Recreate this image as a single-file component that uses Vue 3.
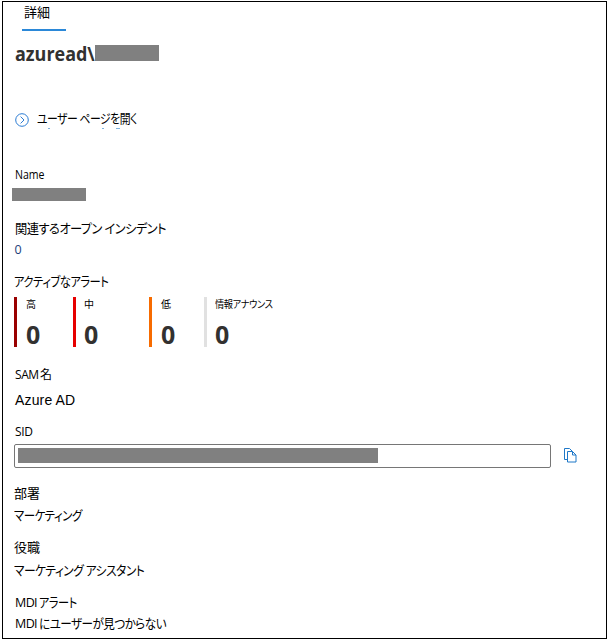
<script setup>
const alerts = [
  { label: '高', count: 0, tone: 'high' },
  { label: '中', count: 0, tone: 'medium' },
  { label: '低', count: 0, tone: 'low' },
  { label: '情報アナウンス', count: 0, tone: 'info' },
]
</script>

<template>
  <main class="panel">
    <nav class="tabs"><span class="tab">詳細</span></nav>
    <h1 class="title"><span>azuread\</span><i class="mask title-mask"></i></h1>
    <a class="open">
      <svg class="open-icon" viewBox="0 0 14 14"><circle cx="7" cy="7" r="6.3" /><path d="M5.6 3.6 9 7 5.6 10.4" /></svg>
      <span class="open-text">ユーザー ページを開く</span>
    </a>
    <div class="marks"><i></i><i></i><i></i></div>

    <div class="row name">Name</div>
    <i class="mask name-mask"></i>
    <div class="row incidents">関連するオープン インシデント</div>
    <div class="row zero">0</div>
    <div class="row active">アクティブなアラート</div>
    <section class="alerts">
      <div v-for="a in alerts" :key="a.tone" class="alert" :class="a.tone">
        <span class="alert-label">{{ a.label }}</span>
        <strong>{{ a.count }}</strong>
      </div>
    </section>
    <div class="row sam">SAM 名</div>
    <div class="row azure">Azure AD</div>
    <div class="row sid">SID</div>
    <div class="sid-line">
      <div class="field"><i class="mask field-mask"></i></div>
      <svg class="copy" viewBox="0 0 14 15"><path d="M4.5 11.5h-3V.5h5l3 3M4.5 3.5h5l3.5 3.5v7h-8.5zM9.5 3.5v3.5h3.5" /></svg>
    </div>
    <div class="row dept">部署</div>
    <div class="row marketing">マーケティング</div>
    <div class="row job">役職</div>
    <div class="row assistant">マーケティング アシスタント</div>
    <div class="row mdi">MDI <span class="mdi-rest">アラート</span></div>
    <div class="row missing">MDI <span class="missing-rest">にユーザーが見つからない</span></div>
  </main>
</template>

<style>
body { background: #fff; }
</style>

<style scoped>
.panel {
  box-sizing: border-box;
  width: 605px;
  height: 638px;
  margin: 1px 0 0 2px;
  border: 1px solid #000;
  padding-left: 12px;
  color: #000;
  font-family: "Open Sans", "Noto Sans CJK JP", sans-serif;
  font-size: 13px;
  font-feature-settings: "palt";
  overflow: hidden;
  display: flex;
  flex-direction: column;
  align-items: flex-start;
}
.panel > * { flex-shrink: 0; }
.mask { display: block; background: #808080; }
.tabs { margin-left: 7px; width: 44px; height: 27px; border-bottom: 2px solid #2b88d8; }
.tab { display: block; padding-left: 2px; line-height: 20px; white-space: nowrap; }
.title { display: flex; margin: 14px 0 0; height: 20px; font-size: 19px; line-height: 19px; font-weight: 700; color: #323130; }
.title span { width: 80px; white-space: nowrap; transform: scaleX(.945); transform-origin: left; }
.title-mask { width: 64px; height: 16px; }
.open { display: flex; align-items: center; height: 20px; margin-top: 43px; }
.open-icon { width: 14px; height: 14px; fill: none; stroke: #2b7cd3; stroke-width: 1; margin-top: 3px; }
.open-text { margin-left: 7.5px; line-height: 20px; white-space: nowrap; letter-spacing: -0.6px; transform: scaleX(.835); transform-origin: left; }
.marks { display: flex; height: 1px; margin: 0 0 0 33px; }
.marks i { width: 2px; height: 1px; background: #7eb2df; }
.marks i:nth-child(2) { margin-left: 52px; }
.marks i:nth-child(3) { margin-left: 12px; width: 4px; }
.row { height: 20px; line-height: 20px; white-space: nowrap; transform-origin: left; }
.name { margin-top: 36px; font-size: 12px; transform: scaleX(.88); }
.name-mask { margin: 3px 0 0 -3px; width: 74px; height: 13px; }
.incidents { margin: 17px 0 0 -.5px; letter-spacing: -.6px; transform: scaleX(.943); }
.zero { margin: 2px 0 0 -.5px; font-size: 12.5px; color: #1b3f7a; }
.active { margin: 11px 0 0 -1px; letter-spacing: -.6px; transform: scaleX(.87); }
.alerts { display: grid; grid-template-columns: 59px 76px 55px 90px; grid-template-rows: 50px; margin: 6px 0 0 -1px; height: 50px; }
.alert { border-left: 3px solid; padding-left: 9px; }
.alert.medium, .alert.info { padding-left: 8px; }
.high { border-color: #990000; }
.medium { border-color: #e60000; }
.low { border-color: #f76b00; }
.info { border-color: #e1e1e1; }
.alert-label { display: block; height: 14px; line-height: 14px; font-size: 10px; white-space: nowrap; letter-spacing: -.4px; }
.info .alert-label { transform: scaleX(.92); transform-origin: left; }
.alert strong { display: block; height: 30px; margin-top: 6px; line-height: 34px; font-size: 25px; color: #323130; }
.sam { margin-top: 18px; font-size: 12px; letter-spacing: -.4px; word-spacing: -1.5px; }
.azure { margin-top: 5px; font-family: "Liberation Sans", sans-serif; font-size: 14px; letter-spacing: .15px; }
.sid { margin-top: 12px; font-size: 12px; letter-spacing: -.3px; }
.sid-line { display: flex; align-items: center; height: 24px; margin: 2px 0 0 -1px; }
.field { box-sizing: border-box; width: 537px; height: 24px; border: 1px solid #767676; border-radius: 2px; padding: 3px; }
.field-mask { width: 360px; height: 15px; }
.copy { width: 14px; height: 15px; margin: -2px 0 0 12px; fill: none; stroke: #1f78c8; stroke-width: 1; }
.dept { margin: 15px 0 0 -1px; }
.marketing { margin: 2px 0 0 -1px; letter-spacing: -.6px; transform: scaleX(.885); }
.job { margin: 12px 0 0 -1px; }
.assistant { margin: 3px 0 0 -1px; letter-spacing: -.6px; transform: scaleX(.905); }
.mdi, .missing { letter-spacing: -.6px; word-spacing: -1px; font-size: 12.5px; }
.mdi { margin-top: 12px; }
.missing { margin-top: 1px; }
.mdi-rest, .missing-rest { display: inline-block; font-size: 13px; transform-origin: left; }
.mdi-rest { transform: scaleX(.86); }
.missing-rest { transform: scaleX(.89); }
</style>
